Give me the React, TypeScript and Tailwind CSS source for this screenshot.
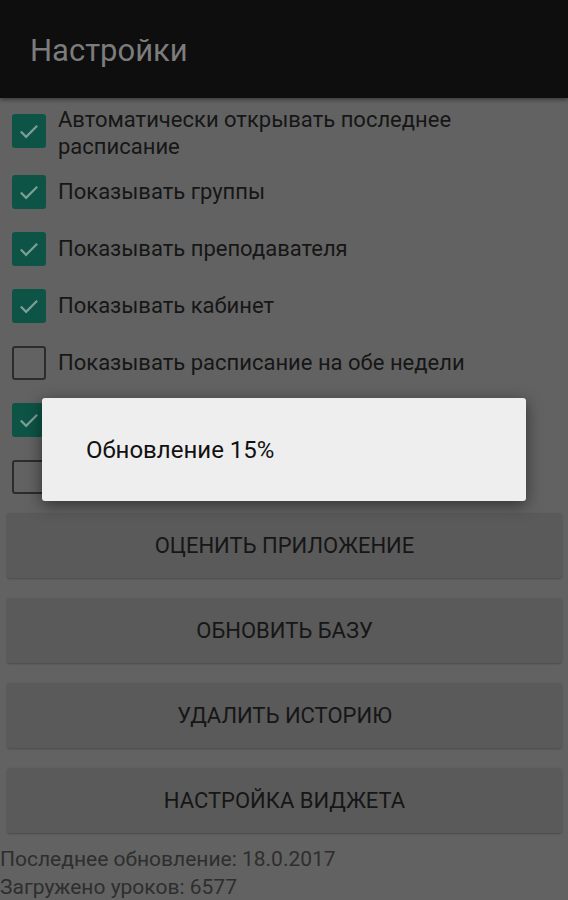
import type { ReactNode } from 'react'

// rows 6 and 7 sit under the progress dialog, only their boxes show
const options = [
  { label: 'Автоматически открывать последнее расписание', checked: true },
  { label: 'Показывать группы', checked: true },
  { label: 'Показывать преподавателя', checked: true },
  { label: 'Показывать кабинет', checked: true },
  { label: 'Показывать расписание на обе недели', checked: false },
  { label: '', checked: true },
  { label: '', checked: false },
]

const actions = ['Оценить приложение', 'Обновить базу', 'Удалить историю', 'Настройка виджета']

function Checkbox({ checked }: { checked: boolean }) {
  if (!checked) {
    return <span className="size-[34px] shrink-0 rounded-[3px] border-2 border-[#2c2c2c]" />
  }
  return (
    <span className="flex size-[34px] shrink-0 items-center justify-center rounded-[3px] bg-[#0d5446]">
      <svg viewBox="0 0 24 24" className="size-[28px]" fill="none" stroke="#7c9f95" strokeWidth="1.9">
        <path d="M5 12.5l4.5 4.5L19 7.5" />
      </svg>
    </span>
  )
}

function Row({ children, checked }: { children: ReactNode; checked: boolean }) {
  return (
    <label className="flex min-h-[57px] items-center gap-[12px] pl-[12px] pr-3 first:items-start first:pt-[4px] first:pb-[3px] [&:first-child>span:first-child]:mt-[8px]">
      <Checkbox checked={checked} />
      <span className="text-[22px] leading-[27px] text-[#161616]">{children}</span>
    </label>
  )
}

export default function App() {
  return (
    <div
      className="relative h-[900px] w-[568px] overflow-hidden bg-[#626262]"
      style={{ fontFamily: 'Roboto, "Noto Sans", sans-serif' }}
    >
      <header className="flex h-[98px] items-center bg-[#0e0e0e] px-[30px] pt-1 shadow-[0_2px_4px_rgba(0,0,0,0.4)]">
        <h1 className="text-[31px] text-[#7c7c7c]">Настройки</h1>
      </header>

      <div className="pt-[4px]">
        <div>
          {options.map((o, i) => (
            <Row key={i} checked={o.checked}>
              {o.label}
            </Row>
          ))}
        </div>

        <div className="mt-[8px] flex flex-col gap-[20px] pl-[7px] pr-[6px]">
          {actions.map((a) => (
            <button
              key={a}
              className="h-[65px] rounded-[3px] bg-[#5a5a5a] text-[22px] uppercase text-[#161616] shadow-[0_1px_2px_rgba(0,0,0,0.25)]"
            >
              {a}
            </button>
          ))}
        </div>

        <div className="mt-[12px] text-[21px] leading-[28px] text-[#2e2e2e]">
          <p>Последнее обновление: 18.0.2017</p>
          <p>Загружено уроков: 6577</p>
        </div>
      </div>

      <div className="absolute left-[42px] top-[398px] flex h-[103px] w-[484px] items-center rounded-[3px] bg-[#eeeeee] px-[44px] shadow-[0_4px_16px_rgba(0,0,0,0.5)]">
        <p className="text-[24px] text-[#111111]">Обновление 15%</p>
      </div>
    </div>
  )
}
